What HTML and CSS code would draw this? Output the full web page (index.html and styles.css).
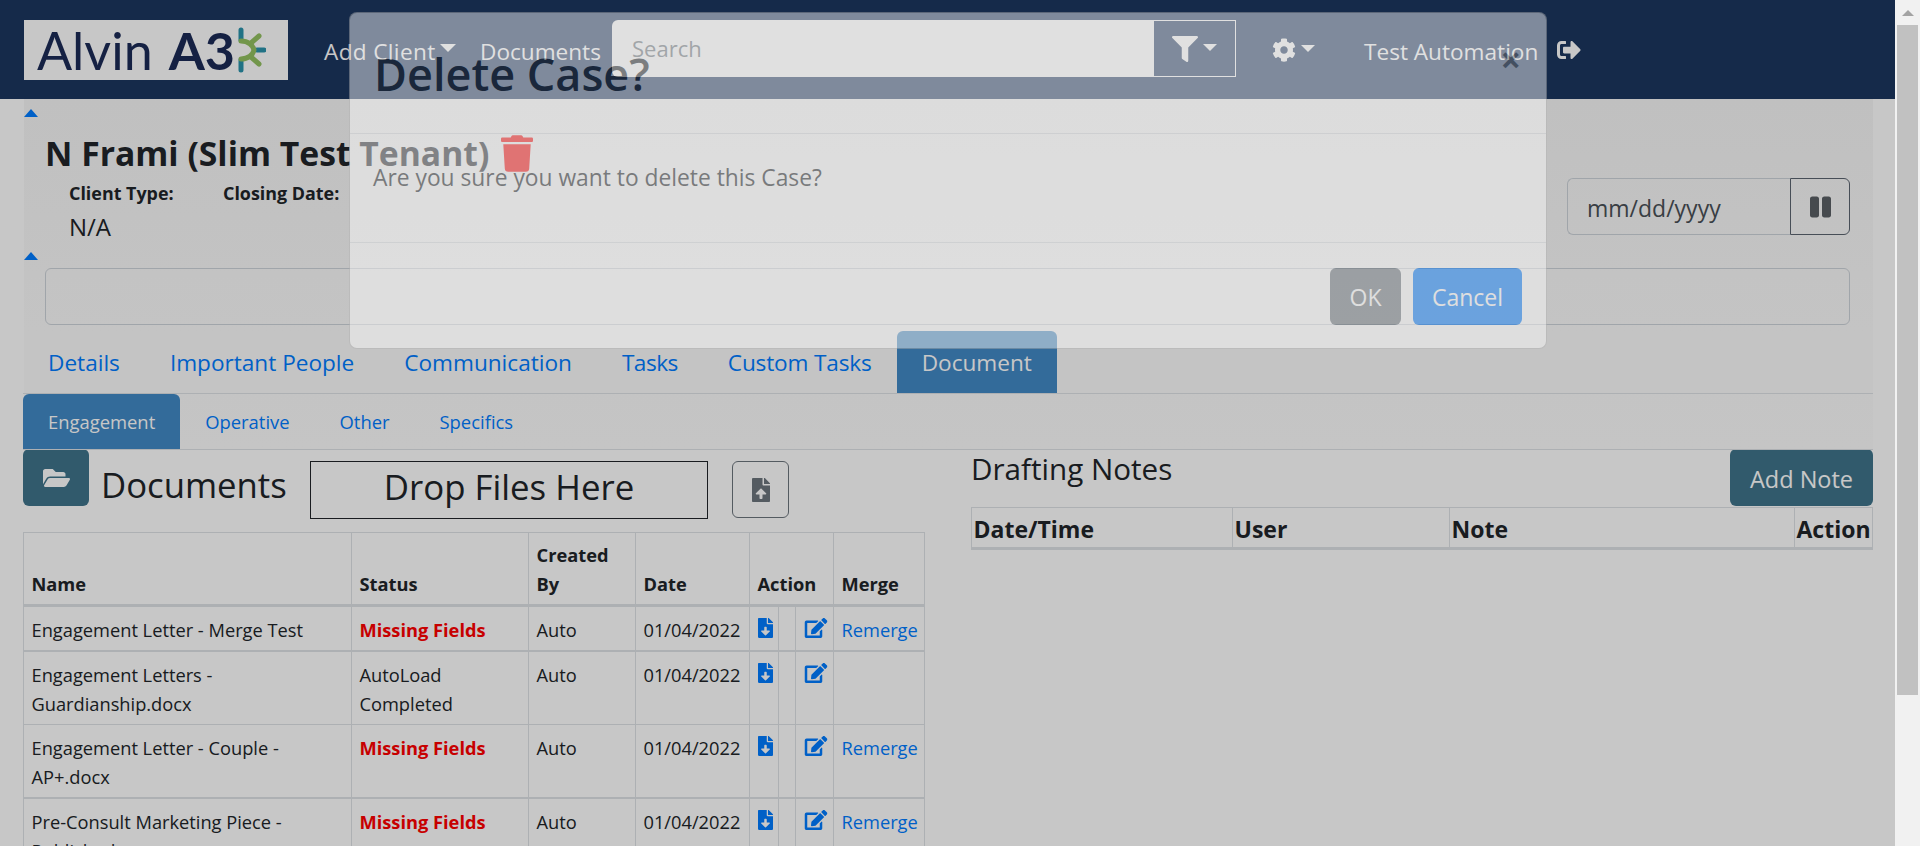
FILE: index.html
```html
<!DOCTYPE html>
<html lang="en">
<head>
<meta charset="utf-8">
<title>Alvin A3</title>
<link rel="stylesheet" href="styles.css">
</head>
<body>
<svg class="sprite" xmlns="http://www.w3.org/2000/svg">
  <symbol id="i-filter" viewBox="0 0 512 512"><path d="M487.976 0H24.028C2.71 0-8.047 25.866 7.058 40.971L192 225.941V432c0 7.831 3.821 15.17 10.237 19.662l80 55.98C298.02 518.69 320 507.493 320 487.98V225.941l184.947-184.97C520.021 25.896 509.338 0 487.976 0z"/></symbol>
  <symbol id="i-cog" viewBox="0 0 512 512"><path d="M487.4 315.7l-42.6-24.6c4.3-23.2 4.3-47 0-70.2l42.6-24.6c4.9-2.8 7.1-8.6 5.5-14-11.1-35.6-30-67.8-54.7-94.6-3.8-4.1-10-5.1-14.8-2.3L380.8 110c-17.9-15.4-38.5-27.3-60.8-35.1V25.8c0-5.6-3.9-10.5-9.4-11.7-36.7-8.2-74.3-7.8-109.2 0-5.5 1.2-9.4 6.1-9.4 11.7V75c-22.2 7.9-42.8 19.8-60.8 35.1L88.7 85.5c-4.9-2.8-11-1.9-14.8 2.3-24.7 26.7-43.6 58.9-54.7 94.6-1.7 5.4.6 11.2 5.5 14L67.3 221c-4.3 23.2-4.3 47 0 70.2l-42.6 24.6c-4.9 2.8-7.1 8.6-5.5 14 11.1 35.6 30 67.8 54.7 94.6 3.8 4.1 10 5.1 14.8 2.3l42.6-24.6c17.9 15.4 38.5 27.3 60.8 35.1v49.2c0 5.6 3.9 10.5 9.4 11.7 36.7 8.2 74.3 7.8 109.2 0 5.5-1.2 9.4-6.1 9.4-11.7v-49.2c22.2-7.9 42.8-19.8 60.8-35.1l42.6 24.6c4.9 2.8 11 1.9 14.8-2.3 24.7-26.7 43.6-58.9 54.7-94.6 1.5-5.5-.7-11.3-5.6-14.1zM256 336c-44.1 0-80-35.9-80-80s35.9-80 80-80 80 35.9 80 80-35.9 80-80 80z"/></symbol>
  <symbol id="i-signout" viewBox="0 0 512 512"><path d="M497 273L329 441c-15 15-41 4.5-41-17v-96H152c-13.3 0-24-10.7-24-24v-96c0-13.3 10.7-24 24-24h136V88c0-21.4 25.9-32 41-17l168 168c9.3 9.4 9.3 24.6 0 34zM192 436v-40c0-6.6-5.4-12-12-12H96c-17.7 0-32-14.3-32-32V160c0-17.7 14.3-32 32-32h84c6.6 0 12-5.4 12-12V76c0-6.6-5.4-12-12-12H96c-53 0-96 43-96 96v192c0 53 43 96 96 96h84c6.6 0 12-5.4 12-12z"/></symbol>
  <symbol id="i-folder" viewBox="0 0 576 512"><path d="M572.694 292.093L500.27 416.248A63.997 63.997 0 0 1 444.989 448H45.025c-18.523 0-30.064-20.093-20.731-36.093l72.424-124.155A64 64 0 0 1 152 256h399.964c18.523 0 30.064 20.093 20.73 36.093zM152 224h328v-48c0-26.51-21.49-48-48-48H272l-64-64H48C21.49 64 0 85.49 0 112v278.046l69.077-118.418C86.214 242.25 117.989 224 152 224z"/></symbol>
  <symbol id="i-upload" viewBox="0 0 384 512"><path d="M224 136V0H24C10.7 0 0 10.7 0 24v464c0 13.3 10.7 24 24 24h336c13.3 0 24-10.7 24-24V160H248c-13.2 0-24-10.8-24-24zm65.18 216.01H224v80c0 8.84-7.16 16-16 16h-32c-8.84 0-16-7.16-16-16v-80H94.82c-14.28 0-21.41-17.29-11.27-27.36l96.42-95.7c6.65-6.61 17.39-6.61 24.04 0l96.42 95.7c10.15 10.07 3.03 27.36-11.25 27.36zM377 105L279.1 7c-4.5-4.5-10.6-7-17-7H256v128h128v-6.1c0-6.3-2.5-12.4-7-16.9z"/></symbol>
  <symbol id="i-download" viewBox="0 0 384 512"><path d="M224 136V0H24C10.7 0 0 10.7 0 24v464c0 13.3 10.7 24 24 24h336c13.3 0 24-10.7 24-24V160H248c-13.2 0-24-10.8-24-24zm76.45 211.36l-96.42 95.7c-6.65 6.61-17.39 6.61-24.04 0l-96.42-95.7C73.42 337.29 80.54 320 94.82 320H160v-80c0-8.84 7.16-16 16-16h32c8.84 0 16 7.16 16 16v80h65.18c14.28 0 21.4 17.29 11.27 27.36zM377 105L279.1 7c-4.5-4.5-10.6-7-17-7H256v128h128v-6.1c0-6.3-2.5-12.4-7-16.9z"/></symbol>
  <symbol id="i-edit" viewBox="0 0 576 512"><path d="M402.6 83.2l90.2 90.2c3.8 3.8 3.8 10 0 13.8L274.4 405.6l-92.8 10.3c-12.4 1.4-22.9-9.1-21.5-21.5l10.3-92.8L388.8 83.2c3.8-3.8 10-3.8 13.8 0zm162-22.9l-48.8-48.8c-15.2-15.2-39.9-15.2-55.2 0l-35.4 35.4c-3.8 3.8-3.8 10 0 13.8l90.2 90.2c3.8 3.8 10 3.8 13.8 0l35.4-35.4c15.2-15.3 15.2-40 0-55.2zM384 346.2V448H64V128h229.8c3.2 0 6.2-1.3 8.5-3.5l40-40c7.6-7.6 2.2-20.5-8.5-20.5H48C21.5 64 0 85.5 0 112v352c0 26.5 21.5 48 48 48h352c26.5 0 48-21.5 48-48V306.2c0-10.7-12.9-16-20.5-8.5l-40 40c-2.2 2.3-3.5 5.3-3.5 8.5z"/></symbol>
  <symbol id="i-trash" viewBox="0 0 448 512"><path d="M432 32H312l-9.4-18.7A24 24 0 0 0 281.1 0H166.8a23.72 23.72 0 0 0-21.4 13.3L136 32H16A16 16 0 0 0 0 48v32a16 16 0 0 0 16 16h416a16 16 0 0 0 16-16V48a16 16 0 0 0-16-16zM53.2 467a48 48 0 0 0 47.9 45h245.8a48 48 0 0 0 47.9-45L416 128H32z"/></symbol>
  <symbol id="i-pause" viewBox="0 0 448 512"><path d="M144 479H48c-26.5 0-48-21.5-48-48V79c0-26.5 21.5-48 48-48h96c26.5 0 48 21.5 48 48v352c0 26.5-21.5 48-48 48zm304-48V79c0-26.5-21.5-48-48-48h-96c-26.5 0-48 21.5-48 48v352c0 26.5 21.5 48 48 48h96c26.5 0 48-21.5 48-48z"/></symbol>
</svg>

<div class="window">
  <div class="page">
    <nav class="navbar">
      <a class="logo">
        <span class="logo-light">Alvin</span><span class="logo-bold">A3</span>
        <svg class="logo-mark" viewBox="0 0 28 46">
          <g fill="none" stroke-width="5" stroke-linecap="round">
            <path d="M3 3v10M3 33v10" stroke="#2b93ab"/>
            <path d="M19 23h7" stroke="#2b93ab"/>
            <path d="M3 14c7 0 12 4 13 9c-1 5-6 9-13 9M13 16l8-7M13 30l8 7" stroke="#93c060"/>
          </g>
        </svg>
      </a>
      <a class="nav-link nav-add">Add Client<span class="caret"></span></a>
      <a class="nav-link nav-docs">Documents</a>
      <div class="search">
        <span class="search-input">Search</span>
        <span class="search-btn"><svg class="icon-filter"><use href="#i-filter"/></svg><span class="caret caret-sm"></span></span>
      </div>
      <a class="nav-gear"><svg class="icon-cog"><use href="#i-cog"/></svg><span class="caret caret-sm"></span></a>
      <a class="nav-link nav-user">Test Automation</a>
      <svg class="icon-signout"><use href="#i-signout"/></svg>
    </nav>

    <main class="main">
      <section class="panel">
        <span class="collapse-caret"></span>
        <div class="case-head">
          <div class="case-info">
            <h1 class="case-title">N Frami (Slim Test Tenant) <svg class="icon-trash"><use href="#i-trash"/></svg></h1>
            <div class="case-meta">
              <div class="meta-item meta-type"><b>Client Type:</b><span>N/A</span></div>
              <div class="meta-item"><b>Closing Date:</b></div>
            </div>
          </div>
          <div class="date-group">
            <span class="date-input">mm/dd/yyyy</span>
            <span class="date-btn"><svg class="icon-pause"><use href="#i-pause"/></svg></span>
          </div>
        </div>
        <span class="collapse-caret caret-second"></span>
        <div class="notes-box"></div>
        <ul class="tabs">
          <li class="tab">Details</li>
          <li class="tab">Important People</li>
          <li class="tab">Communication</li>
          <li class="tab tab-tasks">Tasks</li>
          <li class="tab tab-custom">Custom Tasks</li>
          <li class="tab tab-active">Document</li>
        </ul>
        <ul class="subtabs">
          <li class="subtab subtab-active">Engagement</li>
          <li class="subtab">Operative</li>
          <li class="subtab">Other</li>
          <li class="subtab">Specifics</li>
        </ul>
      </section>

      <section class="columns">
        <div class="col-docs">
          <div class="docs-head">
            <span class="btn-folder"><svg class="icon-folder"><use href="#i-folder"/></svg></span>
            <h2 class="docs-title">Documents</h2>
            <div class="dropzone">Drop Files Here</div>
            <span class="btn-upload"><svg class="icon-upload"><use href="#i-upload"/></svg></span>
          </div>
          <table class="table table-docs">
            <colgroup>
              <col class="c-name"><col class="c-status"><col class="c-by"><col class="c-date"><col class="c-a1"><col class="c-a2"><col class="c-a3"><col class="c-merge">
            </colgroup>
            <thead>
              <tr><th>Name</th><th>Status</th><th>Created By</th><th>Date</th><th colspan="3">Action</th><th>Merge</th></tr>
            </thead>
            <tbody>
              <tr>
                <td>Engagement Letter - Merge Test</td><td class="missing">Missing Fields</td><td>Auto</td><td>01/04/2022</td>
                <td class="td-icon"><svg class="icon-dl"><use href="#i-download"/></svg></td><td></td><td class="td-icon"><svg class="icon-edit"><use href="#i-edit"/></svg></td>
                <td><a class="link">Remerge</a></td>
              </tr>
              <tr>
                <td>Engagement Letters - Guardianship.docx</td><td>AutoLoad Completed</td><td>Auto</td><td>01/04/2022</td>
                <td class="td-icon"><svg class="icon-dl"><use href="#i-download"/></svg></td><td></td><td class="td-icon"><svg class="icon-edit"><use href="#i-edit"/></svg></td>
                <td></td>
              </tr>
              <tr>
                <td>Engagement Letter - Couple - AP+.docx</td><td class="missing">Missing Fields</td><td>Auto</td><td>01/04/2022</td>
                <td class="td-icon"><svg class="icon-dl"><use href="#i-download"/></svg></td><td></td><td class="td-icon"><svg class="icon-edit"><use href="#i-edit"/></svg></td>
                <td><a class="link">Remerge</a></td>
              </tr>
              <tr>
                <td>Pre-Consult Marketing Piece - Published</td><td class="missing">Missing Fields</td><td>Auto</td><td>01/04/2022</td>
                <td class="td-icon"><svg class="icon-dl"><use href="#i-download"/></svg></td><td></td><td class="td-icon"><svg class="icon-edit"><use href="#i-edit"/></svg></td>
                <td><a class="link">Remerge</a></td>
              </tr>
            </tbody>
          </table>
        </div>
        <div class="col-notes">
          <div class="notes-head">
            <h3 class="notes-title">Drafting Notes</h3>
            <span class="btn-note">Add Note</span>
          </div>
          <table class="table table-notes">
            <colgroup><col class="n-date"><col class="n-user"><col class="n-note"><col class="n-action"></colgroup>
            <thead><tr><th>Date/Time</th><th>User</th><th>Note</th><th>Action</th></tr></thead>
          </table>
        </div>
      </section>
    </main>

    <div class="backdrop"></div>

    <div class="modal">
      <header class="modal-header">
        <h2 class="modal-title">Delete Case?</h2>
        <span class="modal-close">×</span>
      </header>
      <div class="modal-body">Are you sure you want to delete this Case?</div>
      <footer class="modal-footer">
        <span class="btn btn-ok">OK</span>
        <span class="btn btn-cancel">Cancel</span>
      </footer>
    </div>
  </div>

  <div class="scrollbar">
    <span class="scroll-btn"></span>
    <span class="scroll-thumb"></span>
  </div>
</div>
</body>
</html>
```

FILE: styles.css
```css
* { box-sizing: border-box; }
html, body { margin: 0; height: 100%; overflow: hidden; }
body {
  font-family: "Open Sans", "Noto Sans", "Liberation Sans", sans-serif;
  font-size: 20px;
  color: #212529;
  background: #fff;
}
.sprite { display: none; }
svg { fill: currentColor; display: block; }

.window { display: flex; height: 846px; }
.page { position: relative; flex: 0 0 1895px; width: 1895px; height: 846px; overflow: hidden; background: #fff; }

/* scrollbar */
.scrollbar { flex: 1; background: #f1f1f1; display: flex; flex-direction: column; align-items: center; }
.scroll-btn { width: 0; height: 0; margin-top: 10px; flex: 0 0 6px; border-left: 6px solid transparent; border-right: 6px solid transparent; border-bottom: 6px solid #a3a3a3; }
.scroll-thumb { margin-top: 9px; width: 21px; height: 670px; background: #c1c1c1; }

/* navbar */
.navbar { height: 99px; background: #1b365f; color: #fff; display: flex; align-items: center; padding-left: 24px; }
.nav-link { font-size: 22.6px; line-height: 30px; white-space: nowrap; display: flex; align-items: center; padding-top: 4px; }
.caret { display: inline-block; margin-left: 4px; border-top: 8px solid currentColor; border-left: 8px solid transparent; border-right: 8px solid transparent; margin-top: -7px; }
.caret-sm { margin-left: 5px; border-top-width: 7px; border-left-width: 7px; border-right-width: 7px; margin-top: -2px; }
.logo { width: 264px; height: 60px; background: #fff; display: flex; align-items: center; padding-left: 13px; color: #1c2b57; font-family: Lato, "Open Sans", sans-serif; font-size: 52px; line-height: 60px; flex: none; }
.logo-light { font-weight: 400; margin-right: 16px; }
.logo-bold { font-weight: 700; }
.logo-mark { width: 28px; height: 46px; margin-left: 3px; }
.nav-add { margin-left: 36px; width: 156px; letter-spacing: .35px; }
.nav-docs { width: 132px; }
.search { width: 624px; height: 57px; margin-top: -2px; display: flex; flex: none; }
.search-input { flex: 1; background: #fff; color: #6c757d; border-radius: 6px 0 0 6px; padding: 0 20px; line-height: 57px; font-size: 22px; }
.search-btn { width: 83px; border: 1px solid #fff; display: flex; align-items: center; justify-content: center; }
.icon-filter { width: 26px; height: 26px; }
.nav-gear { margin-left: 36px; width: 92px; display: flex; align-items: center; }
.icon-cog { width: 24px; height: 24px; }
.nav-user { width: 193px; }
.icon-signout { width: 24px; height: 24px; margin-top: 1px; }

/* main panel */
.main { width: 100%; }
.panel { margin-left: 24px; width: 1849px; height: 350px; background: linear-gradient(#f7f7f7, #fdfdfd); position: relative; padding-top: 10px; }
.collapse-caret { display: block; width: 0; height: 0; border-left: 7px solid transparent; border-right: 7px solid transparent; border-bottom: 8px solid #007bff; }
.case-head { display: flex; justify-content: space-between; padding: 0 23px 0 21px; height: 135px; }
.case-title { font-size: 33.7px; font-weight: 700; line-height: 44px; margin: 14px 0 0; display: flex; align-items: center; gap: 12px; white-space: nowrap; }
.icon-trash { width: 32px; height: 37px; color: #f00; margin-top: 0; }
.case-meta { display: flex; padding-left: 24px; margin-top: 5px; }
.meta-item { display: flex; flex-direction: column; }
.meta-item b { font-size: 17.9px; line-height: 26px; }
.meta-item span { font-size: 24px; line-height: 30px; margin-top: 6px; }
.meta-type { width: 154px; }
.date-group { display: flex; width: 283px; height: 57px; margin-top: 61px; }
.date-input { flex: 1; border: 1px solid #ced4da; border-right: 0; border-radius: 6px 0 0 6px; padding: 0 20px 0 19px; line-height: 59px; font-size: 23px; color: #495057; }
.date-btn { width: 60px; border: 1px solid #5b6470; border-radius: 0 6px 6px 0; display: flex; align-items: center; justify-content: center; color: #5a5f65; }
.icon-pause { width: 21px; height: 24px; }
.notes-box { margin: 8px 23px 0 21px; height: 57px; border: 1px solid #ced4da; border-radius: 6px; }
.tabs, .subtabs { list-style: none; margin: 0; padding: 0; display: flex; }
.tabs { margin-top: 6px; height: 63px; border-bottom: 1px solid #dee2e6; margin-left: -1px; }
.tab { padding: 2px 25px 0; font-size: 22.6px; line-height: 60px; color: #007bff; white-space: nowrap; }
.tab-tasks { letter-spacing: -.5px; }
.tab-custom { letter-spacing: -.15px; }
.tab-active { background: #4289c6; color: #fff; border-radius: 6px 6px 0 0; }
.subtabs { height: 56px; border-bottom: 1px solid #dee2e6; margin-left: -1px; width: 1850px; }
.subtab { padding: 0 25px; font-size: 18.4px; line-height: 56px; color: #007bff; white-space: nowrap; }
.subtab-active { background: #4289c6; color: #fff; border-radius: 6px 6px 0 0; }

/* columns */
.columns { display: flex; gap: 46px; padding-left: 23px; }
.col-docs, .col-notes { flex: 0 0 902px; width: 902px; }
.docs-head { display: flex; height: 83px; align-items: flex-start; }
.btn-folder { width: 66px; height: 57px; background: #3f748b; border-radius: 6px; color: #fff; display: flex; align-items: center; justify-content: center; }
.icon-folder { width: 27px; height: 24px; }
.docs-title { font-size: 34.7px; font-weight: 500; line-height: 46px; margin: 13px 0 0 12px; width: 209px; white-space: nowrap; }
.dropzone { width: 398px; height: 58px; margin-top: 12px; border: 1px solid #212529; font-size: 34.8px; line-height: 50px; text-align: center; white-space: nowrap; }
.btn-upload { width: 57px; height: 57px; margin: 12px 0 0 24px; border: 1px solid #6c757d; border-radius: 6px; color: #6c757d; display: flex; align-items: center; justify-content: center; }
.icon-upload { width: 18px; height: 24px; }

.table { border-collapse: collapse; table-layout: fixed; width: 901px; }
.table th, .table td { border: 1px solid #dee2e6; font-size: 18.25px; line-height: 29px; vertical-align: top; text-align: left; padding: 8px 7.5px 6px; }
.table th { vertical-align: bottom; font-weight: 700; border-bottom-width: 3px; padding: 7px 7.5px 6px; }
.table-docs tbody tr:first-child td { border-bottom-width: 2px; }
.table-docs tbody tr:nth-child(3) td { border-bottom-width: 2px; }
.missing { color: #f00; font-weight: 700; }
.link { color: #007bff; }
.td-icon { color: #007bff; }
.icon-dl { width: 15px; height: 20px; margin-top: 3px; }
.icon-edit { width: 24px; height: 20px; margin-top: 3px; }
.c-name { width: 328px; }
.c-status { width: 177px; }
.c-by { width: 107px; }
.c-date { width: 114px; }
.c-a1 { width: 29px; }
.c-a2 { width: 17px; }
.c-a3 { width: 38px; }
.c-merge { width: 91px; }

.notes-head { display: flex; justify-content: space-between; height: 58px; }
.notes-title { font-size: 29.6px; font-weight: 500; line-height: 40px; margin: 0; }
.btn-note { width: 143px; height: 57px; background: #3f748b; color: #fff; border-radius: 6px; font-size: 23.5px; line-height: 60px; text-align: center; }
.table-notes th { font-size: 23px; padding: 5px 1.5px 2px; line-height: 32px; }
.n-date { width: 261px; }
.n-user { width: 217px; }
.n-note { width: 345px; }
.n-action { width: 78px; }

/* overlay */
.backdrop { position: absolute; inset: 0; background: rgba(0, 0, 0, .22); }
.modal { position: absolute; left: 349px; top: 12px; width: 1198px; height: 337px; background: #fff; border: 1px solid rgba(0, 0, 0, .3); border-radius: 8px; opacity: .45; display: flex; flex-direction: column; }
.modal-header { height: 121px; border-bottom: 1px solid #dee2e6; position: relative; padding: 33px 24px 0; }
.modal-title { font-size: 45px; font-weight: 600; line-height: 56px; margin: 0; white-space: nowrap; }
.modal-close { position: absolute; right: 25px; top: 22px; font-size: 36px; font-weight: 700; line-height: 50px; color: #000; opacity: .5; }
.modal-body { flex: 1; padding: 26px 24px 0 23px; font-size: 22.8px; line-height: 36px; }
.modal-footer { height: 106px; border-top: 1px solid #dee2e6; display: flex; justify-content: flex-end; gap: 12px; padding: 25px 24px 0; }
.btn { height: 57px; border-radius: 6px; color: #fff; font-size: 23px; line-height: 58px; text-align: center; }
.btn-ok { width: 71px; background: #6c757d; }
.btn-cancel { width: 109px; background: #007bff; }
```
